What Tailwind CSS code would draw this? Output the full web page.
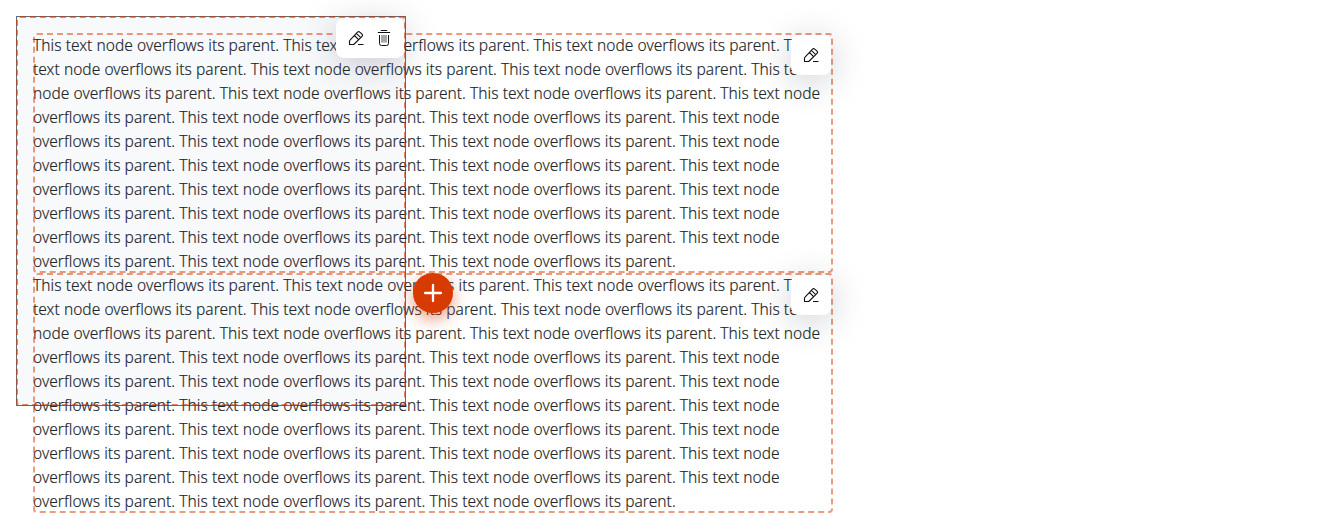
<!DOCTYPE html>
<html lang="en">
<head>
<meta charset="utf-8">
<title>Overflowing text nodes</title>
<script src="https://cdn.jsdelivr.net/npm/@tailwindcss/browser@4"></script>
</head>
<body class="h-[513px] overflow-hidden bg-white p-4 font-['Noto_Sans',sans-serif] text-[15.5px] leading-6 font-light tracking-[0.05px] text-[#212529] [-webkit-text-stroke:0.15px_#212529]">
<svg class="hidden">
  <symbol id="pencil" viewBox="0 0 16 16"><path d="M1.5 14.5V11.2Q1.5 10.6 2 10.1L9.5 2.2Q10.7 1 11.8 2.1L14 4.2Q15.1 5.3 14 6.4L6.3 14Q5.8 14.5 5.2 14.5ZM6.4 5.5L10.6 9.7M8.4 3.4L12.7 7.6M10 14.5H15.5" fill="none" stroke="#111" stroke-width="1.1" stroke-linejoin="round"/></symbol>
  <symbol id="trash" viewBox="0 0 16 16"><path d="M1.8 2.5H14.2M4.8 .5H11.2M3.5 5V13.5Q3.5 15.5 5.5 15.5H10.5Q12.5 15.5 12.5 13.5V5" fill="none" stroke="#111" stroke-width="1"/><path d="M6 5V12.5M8 5V12.5M10 5V12.5" stroke="#111" stroke-width=".75"/></symbol>
</svg>
<main class="relative h-[390px] w-[390px] border border-[#5f6b7a] bg-[#f8f9fb] p-4">
  <section class="relative h-60 w-[800px]">
    <p>This text node overflows its parent. This text node overflows its parent. This text node overflows its parent. This text node overflows its parent. This text node overflows its parent. This text node overflows its parent. This text node overflows its parent. This text node overflows its parent. This text node overflows its parent. This text node<br>overflows its parent. This text node overflows its parent. This text node overflows its parent. This text node<br>overflows its parent. This text node overflows its parent. This text node overflows its parent. This text node<br>overflows its parent. This text node overflows its parent. This text node overflows its parent. This text node<br>overflows its parent. This text node overflows its parent. This text node overflows its parent. This text node<br>overflows its parent. This text node overflows its parent. This text node overflows its parent. This text node<br>overflows its parent. This text node overflows its parent. This text node overflows its parent. This text node<br>overflows its parent. This text node overflows its parent. This text node overflows its parent.</p>
    <div class="absolute inset-0 rounded border-2 border-dashed border-[#d83b01]/50"></div>
    <button class="absolute top-0.5 right-0.5 grid size-10 place-items-center rounded-lg bg-white shadow-[0_6px_34px_rgba(50,60,80,0.25)]"><svg class="size-4"><use href="#pencil"/></svg></button>
  </section>
  <section class="relative h-60 w-[800px]">
    <p>This text node overflows its parent. This text node overflows its parent. This text node overflows its parent. This text node overflows its parent. This text node overflows its parent. This text node overflows its parent. This text node overflows its parent. This text node overflows its parent. This text node overflows its parent. This text node<br>overflows its parent. This text node overflows its parent. This text node overflows its parent. This text node<br>overflows its parent. This text node overflows its parent. This text node overflows its parent. This text node<br>overflows its parent. This text node overflows its parent. This text node overflows its parent. This text node<br>overflows its parent. This text node overflows its parent. This text node overflows its parent. This text node<br>overflows its parent. This text node overflows its parent. This text node overflows its parent. This text node<br>overflows its parent. This text node overflows its parent. This text node overflows its parent. This text node<br>overflows its parent. This text node overflows its parent. This text node overflows its parent.</p>
    <div class="absolute inset-0 rounded border-2 border-dashed border-[#d83b01]/50"></div>
    <button class="absolute top-0.5 right-0.5 grid size-10 place-items-center rounded-lg bg-white shadow-[0_6px_34px_rgba(50,60,80,0.25)]"><svg class="size-4"><use href="#pencil"/></svg></button>
    <button aria-label="Add" class="absolute top-0 left-[380px] grid size-10 place-items-center rounded-full bg-[#d83b01] shadow-[0_6px_16px_rgba(216,59,1,0.5)]"><svg class="size-5" viewBox="0 0 20 20"><path d="M10 2V18M2 10H18" stroke="#fff" stroke-width="2.3" stroke-linecap="round"/></svg></button>
  </section>
  <div class="absolute -inset-px rounded border-2 border-dashed border-[#d83b01]/60"></div>
  <div class="absolute top-px right-px flex h-10 w-[68px] items-center gap-3 rounded-lg bg-white px-3 shadow-[0_6px_34px_rgba(50,60,80,0.25)]"><svg class="size-4 shrink-0"><use href="#pencil"/></svg><svg class="size-4 shrink-0"><use href="#trash"/></svg></div>
</main>
</body>
</html>
